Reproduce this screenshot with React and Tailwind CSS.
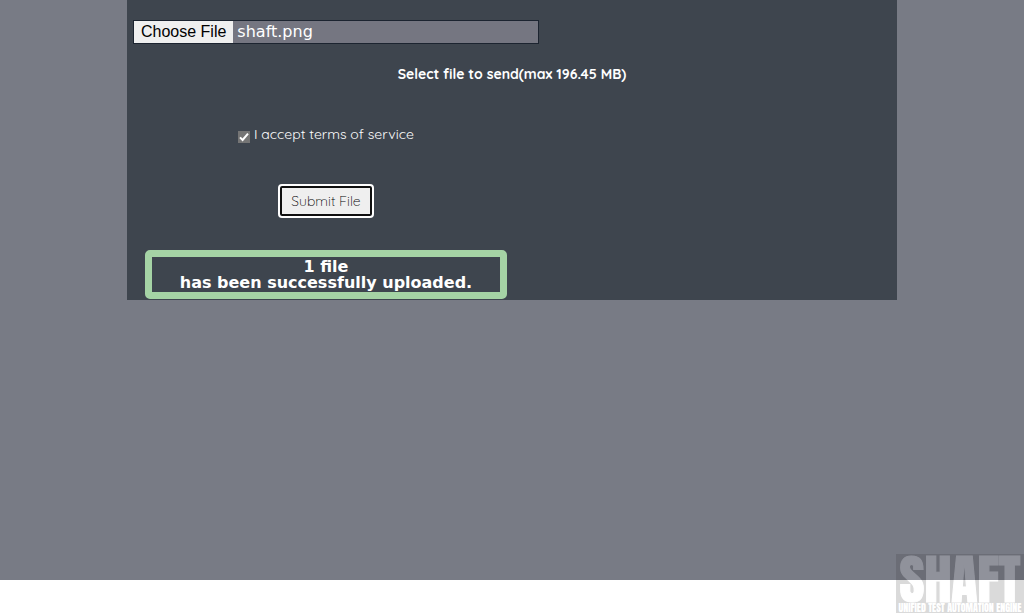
import { useState } from 'react';

function FilePicker() {
  const [name, setName] = useState('shaft.png');
  return (
    <label className="flex h-6 w-[406px] max-w-full cursor-pointer items-stretch border border-[#1c2430] bg-[#757681] text-base">
      <input
        type="file"
        className="sr-only"
        onChange={(e) => setName(e.target.files[0]?.name ?? 'No file chosen')}
      />
      <span className="flex items-center bg-[#efefef] px-[7px] font-['Liberation_Sans',sans-serif] text-black">
        Choose File
      </span>
      <span className="flex items-center px-1 font-['DejaVu_Sans',sans-serif] text-white">
        {name}
      </span>
    </label>
  );
}

function Watermark() {
  return (
    <div className="fixed right-0 bottom-0 opacity-[0.18]">
      <svg width="128" height="59" viewBox="0 0 128 59" role="img" aria-label="SHAFT">
        <rect width="128" height="59" fill="#333333" />
        <g fill="#ffffff" textAnchor="middle" fontFamily="Anton, 'Liberation Sans', sans-serif">
          <text x="64" y="48" fontSize="54" stroke="#ffffff" strokeWidth="1">
            SHAFT
          </text>
          <text x="64" y="58" fontSize="10">
            UNIFIED TEST AUTOMATION ENGINE
          </text>
        </g>
      </svg>
    </div>
  );
}

export default function App() {
  const [accepted, setAccepted] = useState(true);
  return (
    <div className="min-h-[580px] bg-[#787b85] font-['Quicksand',Lato,sans-serif] text-white">
      <form
        className="mx-auto w-[75.2%] bg-[#3e454e] pt-5"
        onSubmit={(e) => e.preventDefault()}
      >
        <div className="pl-[6px]">
          <FilePicker />
        </div>
        <p className="mt-5 text-center text-sm leading-5 font-bold">
          Select file to send(max 196.45 MB)
        </p>
        <div className="mt-10 flex h-5 items-center pl-[111px]">
          <label className="flex items-center gap-1 text-sm leading-5">
            <input
              type="checkbox"
              checked={accepted}
              onChange={(e) => setAccepted(e.target.checked)}
              className="peer sr-only"
            />
            <span className="mt-1.5 flex size-3 items-center justify-center bg-[#757575] peer-checked:[&>svg]:block">
              <svg viewBox="0 0 12 12" className="hidden size-3" fill="none" stroke="#ffffff" strokeWidth="2">
                <path d="M2 6.4 L4.6 9 L10 2.6" />
              </svg>
            </span>
            I accept terms of service
          </label>
        </div>
        <div className="mt-[42px] pl-[153px]">
          <button
            type="submit"
            className="h-[30px] w-23 rounded-xs border-2 border-[#101010] bg-[#efefef] text-sm font-light text-black outline-2 outline-white"
          >
            Submit File
          </button>
        </div>
        <div className="mt-[34px] pb-px pl-[18px]">
          <p
            role="status"
            className="w-[362px] max-w-full rounded-[5px] border-7 border-[#a5d3a5] pt-0.5 pb-px text-center font-['DejaVu_Sans',sans-serif] text-base leading-4 font-bold"
          >
            1 file
            <br />
            has been successfully uploaded.
          </p>
        </div>
      </form>
      <Watermark />
    </div>
  );
}
